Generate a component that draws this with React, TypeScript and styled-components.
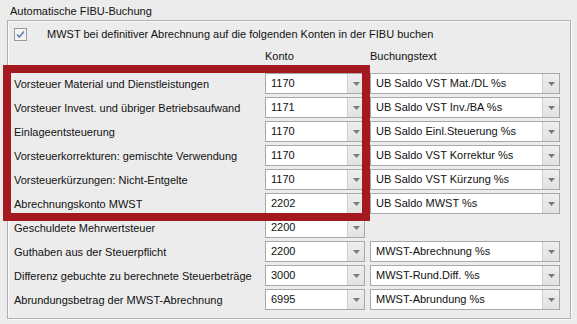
import React from 'react';
import styled, {createGlobalStyle} from 'styled-components';

const GlobalStyle = createGlobalStyle`
    html, body {
        margin: 0;
        padding: 0;
        background: #ececec;
    }
    body {
        font-family: "Liberation Sans", Arial, sans-serif;
        font-size: 11px;
        color: #111;
    }
`;

type Row = {
    label: string
    konto: string
    text?: string
}

const rows: Row[] = [
    {label: 'Vorsteuer Material und Dienstleistungen', konto: '1170', text: 'UB Saldo VST Mat./DL %s'},
    {label: 'Vorsteuer Invest. und übriger Betriebsaufwand', konto: '1171', text: 'UB Saldo VST Inv./BA %s'},
    {label: 'Einlageentsteuerung', konto: '1170', text: 'UB Saldo Einl.Steuerung %s'},
    {label: 'Vorsteuerkorrekturen: gemischte Verwendung', konto: '1170', text: 'UB Saldo VST Korrektur %s'},
    {label: 'Vorsteuerkürzungen: Nicht-Entgelte', konto: '1170', text: 'UB Saldo VST Kürzung %s'},
    {label: 'Abrechnungskonto MWST', konto: '2202', text: 'UB Saldo MWST %s'},
    {label: 'Geschuldete Mehrwertsteuer', konto: '2200'},
    {label: 'Guthaben aus der Steuerpflicht', konto: '2200', text: 'MWST-Abrechnung %s'},
    {label: 'Differenz gebuchte zu berechnete Steuerbeträge', konto: '3000', text: 'MWST-Rund.Diff. %s'},
    {label: 'Abrundungsbetrag der MWST-Abrechnung', konto: '6995', text: 'MWST-Abrundung %s'},
];

const Combo: React.FC<{value: string, width: number}> = ({value, width}) => (
    <ComboBox $width={width}>
        <ComboValue>{value}</ComboValue>
        <ComboButton>
            <svg width="7" height="4" viewBox="0 0 7 4">
                <path d="M0 0 H7 L3.5 4 Z" fill="#7a7a7a" />
            </svg>
        </ComboButton>
    </ComboBox>
);

const App: React.FC = () => {
    return (
        <Page>
            <GlobalStyle />
            <Title>Automatische FIBU-Buchung</Title>
            <GroupBox>
                <CheckRow>
                    <CheckBox>
                        <svg width="11" height="11" viewBox="0 0 11 11">
                            <path d="M2 5.5 L4.3 8 L9 2.5" stroke="#5f7fb0" strokeWidth="1.6" fill="none" />
                        </svg>
                    </CheckBox>
                    <span>MWST bei definitiver Abrechnung auf die folgenden Konten in der FIBU buchen</span>
                </CheckRow>
                <Table>
                    <span />
                    <Header>Konto</Header>
                    <Header>Buchungstext</Header>
                    {rows.map((r, i) => (
                        <React.Fragment key={i}>
                            <Label>{r.label}</Label>
                            <Combo value={r.konto} width={100} />
                            {r.text ? <Combo value={r.text} width={190} /> : <span />}
                        </React.Fragment>
                    ))}
                </Table>
            </GroupBox>
            <Highlight />
        </Page>
    );
};

const Page = styled.div`
    position: relative;
    width: 577px;
    height: 324px;
    padding: 4px 0 0 7px;
    box-sizing: border-box;
`;

const Title = styled.div`
    height: 16px;
    line-height: 14px;
    padding-left: 3px;
`;

const GroupBox = styled.div`
    width: 564px;
    height: 299px;
    box-sizing: border-box;
    border: 1px solid #aeaeb6;
    box-shadow: inset 1px 1px 0 #fafafa, 1px 1px 0 #fafafa;
    padding: 7px 0 0 6px;
`;

const CheckRow = styled.div`
    display: flex;
    align-items: center;
    height: 13px;
    gap: 20px;
    line-height: 13px;
`;

const CheckBox = styled.div`
    width: 11px;
    height: 11px;
    border: 1px solid #9a9a9a;
    background: #f3f3f3;
    display: flex;
    align-items: center;
    justify-content: center;
`;

const Table = styled.div`
    display: grid;
    grid-template-columns: 246px 100px 190px;
    grid-auto-rows: 21px;
    column-gap: 5px;
    row-gap: 3px;
    margin-top: 8px;
    align-items: center;
`;

const Header = styled.div`
    line-height: 14px;
    align-self: start;
`;

const Label = styled.div`
    white-space: nowrap;
    line-height: 14px;
`;

const ComboBox = styled.div<{$width: number}>`
    width: ${p => p.$width}px;
    height: 21px;
    box-sizing: border-box;
    border: 1px solid #a8a8a8;
    background: #fff;
    display: flex;
    align-items: stretch;
`;

const ComboValue = styled.div`
    flex: 1;
    padding-left: 5px;
    line-height: 19px;
    white-space: nowrap;
    overflow: hidden;
`;

const ComboButton = styled.div`
    width: 16px;
    border-left: 1px solid #cfcfcf;
    background: linear-gradient(#eeeeee, #e2e2e2);
    display: flex;
    align-items: center;
    justify-content: center;
`;

const Highlight = styled.div`
    position: absolute;
    left: 3px;
    top: 65px;
    width: 367px;
    height: 156px;
    box-sizing: border-box;
    border: 8px solid #a3191f;
    pointer-events: none;
`;

export default App;
